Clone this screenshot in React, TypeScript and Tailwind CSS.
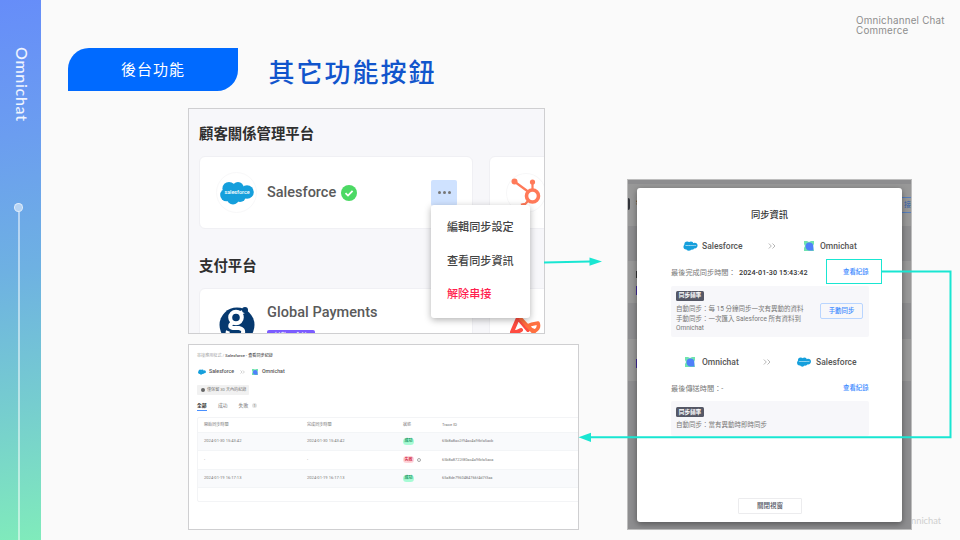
import React from 'react';

const CJK = "font-[Roboto,'Noto_Sans_CJK_TC',sans-serif]";

function Cloud({ className, label = true }: { className: string; label?: boolean }) {
  return (
    <svg viewBox="0 0 34 24" className={className}>
      <g fill="#159fdc">
        <circle cx="9" cy="7.5" r="6.6" />
        <circle cx="18" cy="6.8" r="5.8" />
        <circle cx="27" cy="11" r="6.8" />
        <circle cx="6.5" cy="14" r="6.3" />
        <circle cx="13" cy="17.5" r="6" />
        <circle cx="20" cy="15" r="6" />
      </g>
      {label && (
        <text x="17" y="13" textAnchor="middle" fontSize="5.4" fontWeight="500" fill="#fff" fontFamily="Roboto">
          salesforce
        </text>
      )}
    </svg>
  );
}

function OmniIcon({ className }: { className: string }) {
  return (
    <svg viewBox="0 0 10 10" className={className}>
      <path d="M0 0h3l2 1 2-1h3v3l-1 2 1 5H3L0 10V7l1-2-1-2z" fill="#6fe3b0" />
      <path d="M1.500 5.500A3.900 3.900 0 0 1 5.400 1.600 3.900 3.900 0 0 1 9.300 5.500V9.500H5.400A3.900 3.900 0 0 1 1.500 5.500z" fill="#4f80fa" />
    </svg>
  );
}

function Chevrons({ className }: { className: string }) {
  return (
    <svg viewBox="0 0 8 6" className={className} fill="none" stroke="#a5a5a5" strokeWidth="0.8">
      <path d="M0.8 0.5 3.3 3 0.8 5.5M4.5 0.5 7 3 4.5 5.5" />
    </svg>
  );
}

function Sidebar() {
  return (
    <aside className="flex h-[540px] w-[41px] shrink-0 flex-col bg-[linear-gradient(170deg,#668df9_0%,#6b9df0_25%,#6eb1e2_50%,#76cdcf_75%,#80ebbb_100%)] pt-[47px]">
      <div className="ml-[11px] h-[155px] w-[22px] font-[Lato,sans-serif] text-[16px] font-medium leading-[22px] tracking-[0.7px] text-white/90 [writing-mode:vertical-rl]">
        Omnichat
      </div>
      <div className="ml-[14px] mt-px h-[9px] w-[9px] rounded-full border border-white/60 bg-white/50" />
      <div className="ml-[18px] w-[1.5px] flex-1 bg-white/50" />
    </aside>
  );
}

function Header() {
  return (
    <header className="flex h-[108px] items-start">
      <div className="ml-[27px] mt-[48px] flex h-[43px] w-[170px] items-center justify-center rounded-br-[21px] rounded-tl-[21px] bg-[#006aff] font-['Noto_Sans_CJK_TC',sans-serif] text-[15px] tracking-[1px] text-white">
        後台功能
      </div>
      <h1 className="ml-[30.5px] mt-[50.5px] font-['Noto_Sans_CJK_TC',sans-serif] text-[26px] font-medium leading-[39px] tracking-[2px] text-[#1155cc]">
        其它功能按鈕
      </h1>
      <p className="ml-auto mr-[2px] mt-[16px] w-[102px] whitespace-nowrap font-[Inter,sans-serif] text-[9.8px] leading-[10px] tracking-[0.220px] text-[#8d8d8d]">
        Omnichannel Chat
        <br />
        Commerce
      </p>
    </header>
  );
}

function HubIcon() {
  return (
    <svg viewBox="0 0 40 40" className="h-[40px] w-[40px] shrink-0" fill="none" stroke="#ff7a59">
      <circle cx="20" cy="20" r="19.5" stroke="#f7f7f8" />
      <circle cx="26.5" cy="23" r="6" strokeWidth="3.6" />
      <path d="M26.5 17V9M22 18.5 9 9M22 28l-3 3.2q-1.500-.6-4 .6" strokeWidth="2.200" />
      <circle cx="8.500" cy="8.500" r="3" fill="#ff7a59" stroke="none" />
      <circle cx="26.500" cy="9" r="2.600" fill="#ff7a59" stroke="none" />
    </svg>
  );
}

function ActionMenu() {
  return (
    <div className="absolute left-[242px] top-[96px] z-10 flex h-[113px] w-[99px] flex-col rounded-[3px] bg-white pl-[16px] pt-[6px] text-[11.1px] font-medium leading-[33.500px] text-[#444] shadow-[0_2px_7px_rgba(0,0,0,0.3)]">
      <span>編輯同步設定</span>
      <span>查看同步資訊</span>
      <span className="text-[#ff1f4f]">解除串接</span>
    </div>
  );
}

function PlatformPanel() {
  return (
    <section className={`relative flex h-[226px] w-[357px] flex-col overflow-hidden border border-[#cfcfd1] bg-[#f7f7fa] ${CJK}`}>
      <h2 className="ml-[10px] mt-[14px] h-[33px] shrink-0 text-[14.4px] font-bold leading-[24px] text-[#2f2f2f]">顧客關係管理平台</h2>
      <div className="ml-[10px] flex shrink-0 gap-[16px]">
        <div className="flex h-[73px] w-[274px] shrink-0 items-center rounded-[6px] border border-[#f0f0f4] bg-white">
          <div className="ml-[16px] flex h-[41px] w-[41px] items-center justify-center rounded-full border border-[#f8f8f9]">
            <Cloud className="h-[24px] w-[34px]" />
          </div>
          <span className="ml-[10px] w-[74px] text-[14.500px] font-medium text-[#5a5a5a]">Salesforce</span>
          <svg viewBox="0 0 16 16" className="h-[16px] w-[16px]">
            <circle cx="8" cy="8" r="8" fill="#4cd964" />
            <path d="m4.500 8.200 2.500 2.400 4.600-4.800" fill="none" stroke="#fff" strokeWidth="1.800" />
          </svg>
          <div className="ml-[74px] flex h-[26px] w-[26px] items-center justify-center gap-[2px] rounded-[2px] bg-[#cfe2ff]">
            <i className="h-[3px] w-[3px] rounded-full bg-[#777]" />
            <i className="h-[3px] w-[3px] rounded-full bg-[#777]" />
            <i className="h-[3px] w-[3px] rounded-full bg-[#777]" />
          </div>
        </div>
        <div className="flex h-[73px] w-[274px] shrink-0 items-center rounded-[6px] border border-[#f0f0f4] bg-white pl-[16px]">
          <HubIcon />
        </div>
      </div>
      <h2 className="ml-[10px] mt-[26px] h-[33px] shrink-0 text-[14.4px] font-bold leading-[24px] text-[#2f2f2f]">支付平台</h2>
      <div className="ml-[10px] flex shrink-0 gap-[16px]">
        <div className="flex h-[74px] w-[274px] shrink-0 rounded-[6px] border border-[#f0f0f4] bg-white">
          <svg viewBox="0 0 36 36" className="ml-[19px] mt-[18px] h-[36px] w-[36px]">
            <circle cx="18" cy="18" r="17.500" fill="#06396f" />
            <g fill="none" stroke="#fff" strokeWidth="4">
              <circle cx="17" cy="10.500" r="5.800" />
              <path d="m21 6 4-1.500M13 16q-4 4 1 5h6q5 1 4 5t-9 4-6-6" />
            </g>
            <circle cx="26" cy="3" r="3" fill="#06396f" />
          </svg>
          <div className="ml-[12px] mt-[14px] flex flex-col items-start">
            <span className="h-[27px] text-[14.500px] font-medium leading-[20px] tracking-[0.050px] text-[#5a5a5a]">Global Payments</span>
            <span className="flex h-[13px] w-[48px] items-center justify-center rounded-[2px] bg-[#7b5cff] text-[7px] text-white">付款 / 金流</span>
          </div>
        </div>
        <div className="flex h-[74px] w-[274px] shrink-0 rounded-[6px] border border-[#f0f0f4] bg-white pl-[19px] pt-[24px]">
          <svg viewBox="0 0 34 28" className="h-[28px] w-[34px]" fill="none" strokeWidth="4" strokeLinejoin="round" strokeLinecap="round">
            <path d="M12 17Q7 20 3 19L9 5 19 17" stroke="#ff4b40" />
            <path d="m12 6 13 14M18 13q4-2 11-3 2 5-3 8-4-1-7-5" stroke="#ff7040" strokeWidth="3.500" />
          </svg>
        </div>
      </div>
      <ActionMenu />
    </section>
  );
}

const rows = [
  { start: '2024-01-30 15:43:42', end: '2024-01-30 15:43:42', ok: true, id: '65b8a8ac2f94ac4a9fbfa5acb', tint: true },
  { start: '-', end: '-', ok: false, id: '65b8a8722f80ac4a9fbfa5aca', tint: false },
  { start: '2024-01-19 16:17:13', end: '2024-01-19 16:17:13', ok: true, id: '65a8de7960484766f4d7f3aa', tint: true },
];

function RecordsPanel() {
  return (
    <section className={`mt-[10px] flex h-[186px] w-[391px] flex-col overflow-hidden border border-[#cfcfd1] bg-white pl-[8px] text-[4.100px] text-[#777] ${CJK}`}>
      <div className="mt-[7px] h-[8px] leading-[8px]">
        <span className="text-[#aaa]">串接應用程式 / </span>
        <b className="font-medium text-[#555]">Salesforce - 查看同步紀錄</b>
      </div>
      <div className="mt-[7px] flex h-[10px] items-center text-[5.250px] font-medium text-[#555]">
        <Cloud className="ml-px h-[6px] w-[8px]" label={false} />
        <span className="ml-[3px] w-[31px]">Salesforce</span>
        <Chevrons className="h-[4px] w-[5px]" />
        <OmniIcon className="ml-[7px] h-[6px] w-[6px]" />
        <span className="ml-[4px]">Omnichat</span>
      </div>
      <div className="mt-[8px] flex h-[10px] w-[52px] shrink-0 items-center gap-[2px] rounded-[1px] bg-[#f1f1f1] pl-[4px]">
        <i className="h-[4px] w-[4px] rounded-full bg-[#666]" />
        <span className="whitespace-nowrap">僅保留 30 天內的紀錄</span>
      </div>
      <div className="mt-[6px] flex h-[10px] shrink-0 text-[4.800px] leading-[9px]">
        <b className="w-[10px] border-b border-[#4a90ff] text-[#333]">全部</b>
        <span className="ml-[11px]">成功</span>
        <span className="ml-[11px]">失敗</span>
        <span className="ml-[4px] mt-[2px] h-[5px] w-[5px] rounded-full bg-[#e4e4e4] text-center text-[4px] leading-[5px]">1</span>
      </div>
      <div className="mt-[6px] h-[85px] w-[400px] shrink-0 rounded-[2px] border border-[#f3f4f6] leading-[8px]">
        <div className="flex h-[14px] items-center pl-[6px]">
          <span className="w-[103px]">開始同步時間</span>
          <span className="w-[96px]">完成同步時間</span>
          <span className="w-[39px]">狀態</span>
          <span>Trace ID</span>
        </div>
        {rows.map((r) => (
          <div key={r.id} className={`flex h-[18.500px] items-center pl-[6px] ${r.tint ? 'border-y border-[#f3f5f7] bg-[#f9fafc]' : ''}`}>
            <span className="w-[103px]">{r.start}</span>
            <span className="w-[96px]">{r.end}</span>
            <span className="flex w-[39px] items-center gap-[3px]">
              <b className={`flex h-[7px] w-[11px] items-center justify-center rounded-full ${r.ok ? 'bg-[#a7fbd5] text-[#289968]' : 'bg-[#ffd5da] text-[#d53652]'}`}>
                {r.ok ? '成功' : '失敗'}
              </b>
              {!r.ok && <i className="h-[4px] w-[4px] rounded-full border border-[#aaa]" />}
            </span>
            <span className="text-[3.900px]">{r.id}</span>
          </div>
        ))}
      </div>
    </section>
  );
}

function Tag() {
  return (
    <span className="flex h-[10px] w-[28px] shrink-0 items-center justify-center rounded-[1.500px] bg-[#555866] text-[5.600px] font-bold text-white">
      同步頻率
    </span>
  );
}

function Modal() {
  return (
    <div className="relative ml-[9px] mt-[8px] flex h-[334px] w-[265px] flex-col rounded-[3px] bg-white pl-[34px] text-[#777] shadow-[0_2px_6px_rgba(0,0,0,0.4)]">
      <h3 className="mr-[34px] mt-[19px] h-[16px] shrink-0 text-center text-[9.300px] font-medium leading-[16px] text-[#333]">同步資訊</h3>
      <div className="mt-[17px] flex h-[12px] shrink-0 items-center text-[8.500px] font-medium text-[#555]">
        <Cloud className="ml-[12px] h-[10px] w-[15px]" />
        <span className="ml-[4px] w-[66px]">Salesforce</span>
        <Chevrons className="h-[6px] w-[8px]" />
        <OmniIcon className="ml-[28px] h-[10px] w-[10px]" />
        <span className="ml-[6px]">Omnichat</span>
      </div>
      <div className="mt-[14px] flex h-[14px] w-[198px] shrink-0 items-center text-[7.200px]">
        <span className="w-[68px] whitespace-nowrap">最後完成同步時間：</span>
        <span className="w-[104px] font-medium tracking-[0.050px] text-[#333]">2024-01-30 15:43:42</span>
        <span className="whitespace-nowrap text-[6.400px] font-medium text-[#3f8cff]">查看紀錄</span>
      </div>
      <div className="mt-[6px] flex h-[51px] w-[198px] shrink-0 rounded-[2px] bg-[#f7f7fa] pl-[5px]">
        <div className="flex w-[144px] flex-col pt-[5px] text-[6.500px] leading-[9.500px]">
          <Tag />
          <span className="mt-[4px] whitespace-nowrap">自動同步：每 15 分鐘同步一次有異動的資料</span>
          <span className="whitespace-nowrap">手動同步：一次匯入 Salesforce 所有資料到</span>
          <span className="leading-[8px]">Omnichat</span>
        </div>
        <button className="mt-[17px] flex h-[16px] w-[43px] items-center justify-center rounded-[2px] border border-[#b9d5ff] pt-px text-[6.400px] font-medium text-[#3f8cff]">
          手動同步
        </button>
      </div>
      <div className="mt-[19px] flex h-[12px] shrink-0 items-center text-[8.500px] font-medium text-[#555]">
        <OmniIcon className="ml-[14px] h-[10px] w-[10px]" />
        <span className="ml-[7px] w-[61px]">Omnichat</span>
        <Chevrons className="h-[6px] w-[8px]" />
        <Cloud className="ml-[26px] h-[10px] w-[14px]" />
        <span className="ml-[5px]">Salesforce</span>
      </div>
      <div className="mt-[14px] flex h-[14px] w-[198px] shrink-0 items-center text-[7.200px]">
        <span className="w-[172px]">最後傳送時間：-</span>
        <span className="whitespace-nowrap text-[6.400px] font-medium text-[#3f8cff]">查看紀錄</span>
      </div>
      <div className="mt-[5px] flex h-[35px] w-[198px] shrink-0 flex-col rounded-[2px] bg-[#f7f7fa] pl-[5px] pt-[6px] text-[6.500px] leading-[10px]">
        <Tag />
        <span className="mt-[3px]">自動同步：當有異動時即時同步</span>
      </div>
      <button className="ml-[67px] mt-[62px] flex h-[16px] w-[64px] shrink-0 items-center justify-center rounded-[1px] border border-[#ececee] pt-px text-[6.500px] font-medium text-[#555866]">
        關閉視窗
      </button>
    </div>
  );
}

function DimmedPage() {
  return (
    <div className="absolute inset-0 flex flex-col overflow-hidden bg-[#8d8d8f] text-[7px]">
      <div className="mt-[4px] flex h-[42px] shrink-0 bg-[#989898]">
        <span className="mt-[14px] h-[12px] w-[2px] rounded-r bg-[#32343a]" />
        <b className="ml-[6px] mt-[14px] text-[#333]">S</b>
        <span className="ml-auto mt-[13px] h-[16px] w-[12px] border-y border-[#557ebd] text-right leading-[14px] text-[#315fa8]">接</span>
      </div>
      <div className="mt-[35px] flex h-[42px] shrink-0 flex-col bg-[#989898] pl-[8px] pt-[10px]">
        <i className="h-[7px] w-px bg-[#333]" />
        <i className="mt-[8px] h-[9px] w-[2px] bg-[#3e2a99]" />
      </div>
      <div className="mt-[36px] h-[42px] shrink-0 bg-[#989898] pl-[8px] pt-[20px]">
        <div className="h-[9px] w-[2px] bg-[#3e2a99]" />
      </div>
    </div>
  );
}

function Connectors() {
  return (
    <svg viewBox="0 0 960 540" className="pointer-events-none absolute left-0 top-0 z-20 h-[540px] w-[960px]" fill="none" stroke="#19e6d2">
      <path d="M544 262.600 590 261.600" strokeWidth="2" />
      <path d="M589.500 257.500 602 261.400 589.500 265.700z" fill="#19e6d2" stroke="none" />
      <rect x="826.500" y="259.500" width="55" height="24" strokeWidth="1" />
      <path d="M882 271.500H950.500V437.300H590" strokeWidth="2" />
      <path d="M578.500 437.300 591 432.700V442z" fill="#19e6d2" stroke="none" />
    </svg>
  );
}

export default function App() {
  return (
    <div className="relative flex h-[540px] w-[960px] overflow-hidden bg-[#fafafa]">
      <Sidebar />
      <main className="flex w-[919px] flex-col">
        <Header />
        <div className="flex items-start">
          <div className="ml-[147px] flex w-[391px] shrink-0 flex-col">
            <PlatformPanel />
            <RecordsPanel />
          </div>
          <section className={`relative ml-[48px] mt-[71px] h-[351px] w-[285px] shrink-0 border border-[#bdbdbd] ${CJK}`}>
            <DimmedPage />
            <Modal />
          </section>
          <span className="-ml-px mt-[406px] h-[14px] overflow-hidden whitespace-nowrap font-[Lato,sans-serif] text-[9.300px] leading-[14px] text-[#cfcfcf]">
            nnichat
          </span>
        </div>
      </main>
      <Connectors />
    </div>
  );
}
